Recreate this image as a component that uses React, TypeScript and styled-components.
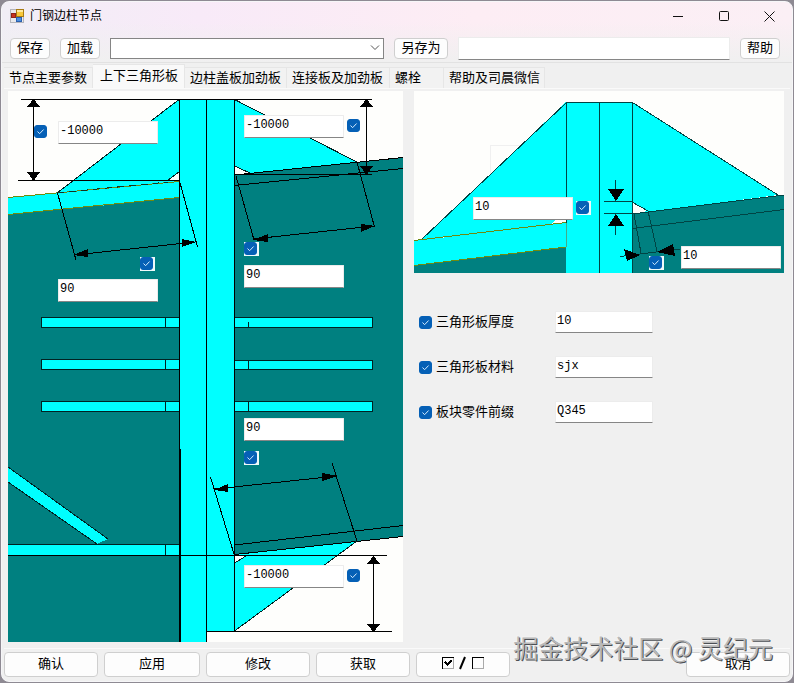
import React from "react";
import styled, { createGlobalStyle, css } from "styled-components";

const CYAN = "#00ffff";
const TEAL = "#008080";
const OLIVE = "#6f8a10";
const PAPER = "#fefefc";
const FACE = "#f0f0f0";

const GlobalStyle = createGlobalStyle`
  *, *::before, *::after { box-sizing: border-box; }
  body {
    margin: 0;
    background: #8e8a93;
    color: #000;
    font: 13px/16px "Noto Sans CJK SC", "Liberation Sans", sans-serif;
  }
  button, input, select { font: inherit; color: inherit; margin: 0; }
`;

const Window = styled.div`
  margin: 1px 1px 2px;
  border: 1px solid #f6f6f8;
  border-radius: 8px;
  overflow: hidden;
  position: relative;
  background: linear-gradient(to bottom, rgba(240, 240, 240, 0) 20px, ${FACE} 60px),
    linear-gradient(to right, #f1eef6, #f8eaf8 25%, #fdedf4 60%, #fbeff5);
`;

const TitleBar = styled.header`
  display: flex;
  align-items: center;
  height: 28px;
  padding-left: 8px;
`;

const Title = styled.h1`
  flex: 1;
  margin: 0 0 2px 6px;
  font-size: 12px;
  font-weight: 400;
`;

const CaptionButton = styled.button`
  width: 46px;
  height: 28px;
  padding: 0;
  border: 0;
  background: transparent;
  display: grid;
  place-items: center;
  &:last-child { width: 45px; }
`;

const Toolbar = styled.div`
  display: grid;
  grid-template-columns: 40px 40px 275fr 54px 273fr 40px;
  align-items: center;
  gap: 10px;
  height: 33px;
  padding: 4px 12px 0 8px;
  border-bottom: 1px solid #e2e2e2;
`;

const PushButton = styled.button`
  display: flex;
  align-items: center;
  justify-content: center;
  border: 1px solid #cfcfcf;
  border-radius: 4px;
  background: #fdfdfd;
  padding: 0 0 2px;
  white-space: nowrap;
`;

const ToolButton = styled(PushButton)`
  height: 21px;
`;

const ComboWrap = styled.div`
  min-width: 0;
  display: grid;
  align-items: center;
  > * { grid-area: 1 / 1; }
  > svg { justify-self: end; margin-right: 4px; pointer-events: none; }
`;

const Combo = styled.select`
  appearance: none;
  width: 100%;
  height: 21px;
  border: 1px solid #858585;
  border-radius: 0;
  background: #fff;
`;

const field = css`
  border: 1px solid #ececec;
  border-bottom-color: #868686;
  border-radius: 1px;
  background: #fff;
  outline: 0;
`;

const NameField = styled.input`
  ${field}
  width: 100%;
  min-width: 0;
  height: 23px;
`;

const TabStrip = styled.div`
  display: flex;
  align-items: flex-end;
  height: 25px;
  padding-left: 2px;
`;

const Tab = styled.button<{ $active?: boolean; $width: number }>`
  width: ${(p) => p.$width}px;
  height: ${(p) => (p.$active ? 24 : 21)}px;
  padding: ${(p) => (p.$active ? "0 0 4px 7px" : "0 0 2px 5px")};
  border: 1px solid #e6e6e6;
  border-width: 1px 1px 0 0;
  background: ${(p) => (p.$active ? "#f9f9f9" : "#f2f2f2")};
  text-align: left;
  white-space: nowrap;
`;

const TabPage = styled.main`
  display: grid;
  grid-template-columns: 395fr 370fr;
  gap: 11px;
  align-items: start;
  margin: 0 2px;
  padding: 2px 6px 6px 4px;
  border-bottom: 1px solid #fafafa;
  border-top: 1px solid #fafafa;
`;

const Figure = styled.div`
  position: relative;
  > svg { display: block; width: 100%; height: auto; }
`;

/* Places a control on a drawing whose own size is $w by $h. */
const Pin = styled.div<{ $x: number; $y: number; $w: number; $h: number }>`
  position: absolute;
  left: calc(${(p) => p.$x} / ${(p) => p.$w} * 100%);
  top: calc(${(p) => p.$y} / ${(p) => p.$h} * 100%);
  display: flex;
`;

const ValueField = styled.input`
  ${field}
  width: 100px;
  height: 23px;
  padding: 0 0 3px 1px;
  font-family: "Liberation Mono", monospace;
  font-size: 12px;
`;

const CheckBox = styled.span<{ $boxed?: boolean }>`
  display: inline-grid;
  flex: none;
  padding: ${(p) => (p.$boxed ? "0 2px 1px 0" : "0")};
  background: ${(p) => (p.$boxed ? "#eefafa" : "transparent")};
  > * { grid-area: 1 / 1; }
  > input {
    appearance: none;
    width: 13px;
    height: 13px;
    border: 1px solid #005a9e;
    border-radius: 3px;
    background: #fff;
  }
  > input:checked { background: #0560b6; border-color: #0560b6; }
  > svg { pointer-events: none; visibility: hidden; }
  > input:checked + svg { visibility: visible; }
`;

const Options = styled.div`
  display: grid;
  gap: 23px;
  padding: 38px 0 0 5px;
`;

const OptionRow = styled.div`
  display: grid;
  grid-template-columns: 13px 115px 98px;
  align-items: center;
  column-gap: 4px;
  height: 22px;
  > input { width: 100%; height: 22px; }
  > label { padding-bottom: 2px; }
`;

const Footer = styled.footer`
  display: grid;
  grid-template-columns: 94fr 96fr 104fr 94fr 94fr 164fr 104fr;
  gap: 6px;
  padding: 3px 2px 4px;
`;

const FootButton = styled(PushButton)`
  height: 25px;
  min-width: 0;
  padding-bottom: 4px;
  &:last-child { grid-column: 7; }
`;

const Watermark = styled.div`
  position: absolute;
  right: 19px;
  bottom: 16px;
  font-size: 25px;
  line-height: 36px;
  color: #b9b9b9;
  text-shadow: 1px 1px 0 #4c4f54, -1px -1px 0 #f4f4f4;
  white-space: nowrap;
  pointer-events: none;
`;

function Check({ id, label, boxed }: { id?: string; label?: string; boxed?: boolean }) {
  return (
    <CheckBox $boxed={boxed}>
      <input type="checkbox" id={id} aria-label={label} defaultChecked />
      <svg width="13" height="13" viewBox="0 0 13 13" fill="none" stroke="#d5ecff" aria-hidden="true">
        <path d="M3.5 6.5 5.6 8.7 9.6 4.5" />
      </svg>
    </CheckBox>
  );
}

const pts = (...p: number[]) => p.join(" ");

function Line({ d, color = "#000", w = 1, dash }: { d: number[]; color?: string; w?: number; dash?: string }) {
  return <line x1={d[0]} y1={d[1]} x2={d[2]} y2={d[3]} stroke={color} strokeWidth={w} strokeDasharray={dash} />;
}

function StiffenerLeft({ y, h }: { y: number; h: number }) {
  return (
    <g stroke="#022">
      <rect x="41.5" y={y} width="138" height={h} fill={CYAN} />
      <path d={`M41.5 ${y}v${h}M165.5 ${y}v${h}`} strokeWidth="1.4" />
    </g>
  );
}

function StiffenerRight({ y, h, cut = 0 }: { y: number; h: number; cut?: number }) {
  return (
    <g stroke="#022">
      <rect x="234.5" y={y} width="138" height={h} fill={CYAN} />
      <path d={`M248.5 ${y + cut}v${h - cut}`} />
    </g>
  );
}

function ColumnDrawing() {
  return (
    <svg viewBox="8 91 395 551" shapeRendering="crispEdges" role="img" aria-label="边柱节点立面">
      <rect x="8" y="91" width="395" height="551" fill={PAPER} />
      <polygon points={pts(179, 99, 57, 193, 179, 181)} fill={CYAN} />
      <polygon points={pts(8, 197, 179, 181, 179, 198, 8, 215)} fill={CYAN} />
      <polygon points={pts(8, 215, 179, 198, 179, 642, 8, 642)} fill={TEAL} />
      <polygon points={pts(167, 181, 179, 172, 179, 181)} fill={PAPER} />
      <polygon points={pts(234, 99, 357, 162, 234, 175)} fill={CYAN} />
      <polygon points={pts(234, 175, 403, 157, 403, 537, 234, 555)} fill={TEAL} />
      <polygon points={pts(234, 166, 250, 173, 234, 175)} fill={PAPER} />
      <polygon points={pts(234, 555, 357, 541, 234, 631)} fill={CYAN} />
      <polygon points={pts(234, 556, 246, 556, 234, 563)} fill={PAPER} />
      <rect x="179" y="99" width="28" height="543" fill={CYAN} />
      <rect x="207" y="99" width="27" height="532" fill={CYAN} />

      <Line d={[179, 99.5, 57, 193]} color="#022" />
      <Line d={[167, 181, 179, 172]} color="#022" />
      <Line d={[8, 197.5, 179, 181.5]} color={OLIVE} />
      <Line d={[57, 193, 168, 182]} color="#132" dash="7 5" />
      <Line d={[8, 214.5, 179, 197.5]} color={OLIVE} />
      <Line d={[234.5, 99.5, 357, 162]} color="#022" />
      <Line d={[234.5, 166, 250, 173]} color="#022" />
      <Line d={[234.5, 175, 403, 157.5]} />
      <Line d={[234.5, 185.5, 403, 168.5]} />
      <Line d={[234.5, 545, 403, 525.5]} />
      <Line d={[234.5, 554.5, 403, 536.5]} />
      <Line d={[357, 541, 234.5, 631]} color="#022" />
      <Line d={[234.5, 563, 246, 556]} color="#022" />

      <StiffenerLeft y={317.5} h={10} />
      <StiffenerLeft y={359.5} h={10} />
      <StiffenerLeft y={401.5} h={10} />
      <StiffenerRight y={317.5} h={10} cut={4} />
      <StiffenerRight y={360.5} h={9} />
      <StiffenerRight y={401.5} h={10} />

      <polygon points={pts(8, 467, 108, 539, 97, 544, 8, 482)} fill={CYAN} />
      <path d="M8 467 108 539M8 482 97 544" stroke="#022" />
      <rect x="8" y="545" width="171" height="10" fill={CYAN} />
      <path d="M8 544.5H179M165.5 544.5v11" stroke="#022" />

      <path d="M179.5 99V642M206.5 99V642M234.5 99V631" stroke="#000" />
      <path d="M180 449V642" stroke="#000" strokeWidth="2" />
      <path d="M21 99.5H372M18 180.5H179M234 174.5H372M8 555.5H387M207 631.5H392" stroke="#000" />

      <path d="M33.5 100V180M366.5 100V174M373.5 556V631" stroke="#000" />
      <path d="M57.5 193 76 260M179.5 181 197.5 247M236 176 254 240M357 162 374.5 227M210.5 477 234 554M332 463 357 541" stroke="#000" />
      <path d="M74 255 195 242M253 239 374 226M215 489 337 476" stroke="#000" />
      <g fill="#000">
        <path d="M33.5 99 40 107H27ZM33.5 181 40 172H27Z" />
        <path d="M366.5 99 373 107H360ZM366.5 175 373 166H360Z" />
        <path d="M373.5 556 380 564H367ZM373.5 632 380 624H367Z" />
        <path d="M73 255 88 249V257ZM196 242 182 239V247Z" />
        <path d="M253 240 268 234V242ZM375 226 361 224V232Z" />
        <path d="M214 490 228 484V492ZM338 476 322 473V481Z" />
      </g>
    </svg>
  );
}

function GussetDrawing() {
  return (
    <svg viewBox="414 91 370 182" shapeRendering="crispEdges" role="img" aria-label="三角形板大样">
      <rect x="414" y="91" width="370" height="182" fill={PAPER} />
      <rect x="490.5" y="145.5" width="60" height="60" fill="none" stroke="#f0f0f0" />
      <polygon points={pts(566, 102, 421, 240, 566, 223)} fill={CYAN} />
      <polygon points={pts(414, 241, 566, 223, 566, 247, 414, 266)} fill={CYAN} />
      <polygon points={pts(414, 266, 566, 247, 566, 273, 414, 273)} fill={TEAL} />
      <polygon points={pts(551, 224, 557, 219, 566, 219, 566, 222)} fill={PAPER} />
      <polygon points={pts(632, 102, 778, 195, 632, 214)} fill={CYAN} />
      <polygon points={pts(632, 214, 784, 195, 784, 273, 632, 273)} fill={TEAL} />
      <polygon points={pts(632, 202, 648, 211, 632, 214)} fill={PAPER} />
      <rect x="566" y="102" width="66" height="171" fill={CYAN} />
      <g stroke="#044">
        <path d="M566.5 102.5 421 240M566.5 102.5H632.5L778 195M566.5 102V247M599.5 102V273M632.5 102V273" fill="none" />
        <path d="M632 202 648 211M632 214 784 195M632 228.5 784 209.5" />
        <path d="M604 201.5H632M604 213.5H632M615.5 180V201M615.5 214V235" />
        <path d="M634 214 641 253M648 211 657 251M620 256.5 680 249" />
      </g>
      <Line d={[414, 240.5, 566, 222.5]} color={OLIVE} />
      <Line d={[414, 265.5, 566, 247]} color={OLIVE} />
      <Line d={[566.5, 223, 566.5, 247]} color="#4a8" />
      <g fill="#000">
        <path d="M608 189H624L616 201ZM608 226H624L616 214Z" />
        <path d="M624 249 640 255 627 261ZM657 252 673 244 675 256Z" />
      </g>
    </svg>
  );
}

type Item = { kind: "text" | "check"; x: number; y: number; label: string; value?: string; boxed?: boolean };

const COLUMN_ITEMS: Item[] = [
  { kind: "check", x: 26, y: 34, label: "启用左上高度" },
  { kind: "text", x: 50, y: 30, label: "左上高度", value: "-10000" },
  { kind: "text", x: 236, y: 24, label: "右上高度", value: "-10000" },
  { kind: "check", x: 339, y: 28, label: "启用右上高度" },
  { kind: "check", x: 132, y: 166, label: "启用左上长度", boxed: true },
  { kind: "text", x: 50, y: 188, label: "左上长度", value: "90" },
  { kind: "check", x: 236, y: 151, label: "启用右上长度", boxed: true },
  { kind: "text", x: 236, y: 174, label: "右上长度", value: "90" },
  { kind: "text", x: 236, y: 327, label: "右下长度", value: "90" },
  { kind: "check", x: 236, y: 360, label: "启用右下长度", boxed: true },
  { kind: "text", x: 236, y: 474, label: "右下高度", value: "-10000" },
  { kind: "check", x: 339, y: 478, label: "启用右下高度" },
];

const GUSSET_ITEMS: Item[] = [
  { kind: "text", x: 59, y: 106, label: "竖向切角", value: "10" },
  { kind: "check", x: 162, y: 110, label: "启用竖向切角", boxed: true },
  { kind: "check", x: 235, y: 165, label: "启用横向切角", boxed: true },
  { kind: "text", x: 267, y: 155, label: "横向切角", value: "10" },
];

function Items({ items, w, h }: { items: Item[]; w: number; h: number }) {
  return (
    <>
      {items.map((it) => (
        <Pin key={it.label} $x={it.x} $y={it.y} $w={w} $h={h}>
          {it.kind === "text" ? (
            <ValueField aria-label={it.label} defaultValue={it.value} />
          ) : (
            <Check label={it.label} boxed={it.boxed} />
          )}
        </Pin>
      ))}
    </>
  );
}

const TABS = [
  { name: "节点主要参数", width: 89 },
  { name: "上下三角形板", width: 92, active: true },
  { name: "边柱盖板加劲板", width: 102 },
  { name: "连接板及加劲板", width: 103 },
  { name: "螺栓", width: 54 },
  { name: "帮助及司晨微信", width: 101 },
];

const OPTIONS = [
  { id: "thick", name: "三角形板厚度", value: "10" },
  { id: "material", name: "三角形板材料", value: "sjx" },
  { id: "prefix", name: "板块零件前缀", value: "Q345" },
];

function FormIcon() {
  return (
    <svg width="14" height="14" viewBox="0 0 14 14" aria-hidden="true">
      <rect x="0.5" y="0.5" width="13" height="13" fill="#e9e9ec" stroke="#b5b5bb" />
      <rect x="6.5" y="0.5" width="7" height="7" fill="#f7c73a" stroke="#a87b14" />
      <rect x="7" y="1" width="6" height="2" fill="#fde9a0" />
      <rect x="1.5" y="4.5" width="4" height="4" fill="#c8321f" stroke="#8d2417" />
      <rect x="6.5" y="8.5" width="5" height="4" fill="#4b8fe0" stroke="#2c5fae" />
    </svg>
  );
}

export default function App() {
  return (
    <>
      <GlobalStyle />
      <Window>
        <TitleBar>
          <FormIcon />
          <Title>门钢边柱节点</Title>
          <CaptionButton aria-label="最小化">
            <svg width="11" height="11" stroke="#111"><path d="M0 5.5H10" /></svg>
          </CaptionButton>
          <CaptionButton aria-label="最大化">
            <svg width="11" height="11" stroke="#111" fill="none"><rect x="0.5" y="0.5" width="9" height="9" rx="1" /></svg>
          </CaptionButton>
          <CaptionButton aria-label="关闭">
            <svg width="11" height="11" stroke="#111"><path d="M0.5 0.5 10.5 10.5M10.5 0.5 0.5 10.5" /></svg>
          </CaptionButton>
        </TitleBar>
        <Toolbar>
          <ToolButton>保存</ToolButton>
          <ToolButton>加载</ToolButton>
          <ComboWrap>
            <Combo aria-label="已存方案"><option value="" /></Combo>
            <svg width="10" height="6" fill="none" stroke="#555"><path d="M1 0.5 5 4.5 9 0.5" /></svg>
          </ComboWrap>
          <ToolButton>另存为</ToolButton>
          <NameField aria-label="方案名称" />
          <ToolButton>帮助</ToolButton>
        </Toolbar>
        <TabStrip role="tablist">
          {TABS.map((t) => (
            <Tab key={t.name} role="tab" aria-selected={!!t.active} $active={t.active} $width={t.width}>
              {t.name}
            </Tab>
          ))}
        </TabStrip>
        <TabPage>
          <Figure>
            <ColumnDrawing />
            <Items items={COLUMN_ITEMS} w={395} h={551} />
          </Figure>
          <div>
            <Figure>
              <GussetDrawing />
              <Items items={GUSSET_ITEMS} w={370} h={182} />
            </Figure>
            <Options>
              {OPTIONS.map((o) => (
                <OptionRow key={o.id}>
                  <Check id={o.id} />
                  <label htmlFor={o.id}>{o.name}</label>
                  <ValueField aria-label={o.name} defaultValue={o.value} />
                </OptionRow>
              ))}
            </Options>
          </div>
        </TabPage>
        <Footer>
          <FootButton>确认</FootButton>
          <FootButton>应用</FootButton>
          <FootButton>修改</FootButton>
          <FootButton>获取</FootButton>
          <FootButton aria-label="全选或全不选">
            <svg width="42" height="14" fill="none" stroke="#000" shapeRendering="crispEdges">
              <path d="M0.5 12.5V1.5H11.5M30.5 12.5V1.5H41.5" strokeWidth="1.6" />
              <path d="M1 12.5H11.5V2M31 12.5H41.5V2" stroke="#aaa" />
              <path d="M3 6 5.5 8.5 9.5 4.5" strokeWidth="2" />
              <path d="M18 13 23 1" strokeWidth="2" shapeRendering="auto" />
            </svg>
          </FootButton>
          <FootButton>取消</FootButton>
        </Footer>
        <Watermark>掘金技术社区 @ 灵纪元</Watermark>
      </Window>
    </>
  );
}
